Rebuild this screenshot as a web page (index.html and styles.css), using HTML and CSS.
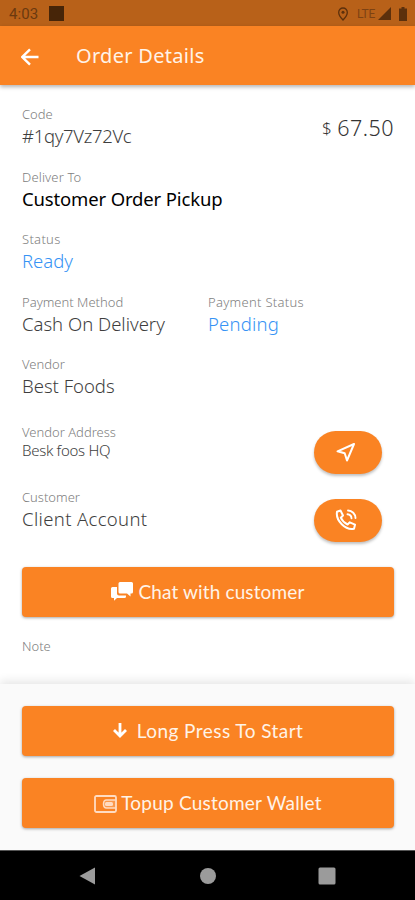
FILE: index.html
```html
<!DOCTYPE html>
<html lang="en">
<head>
<meta charset="utf-8">
<title>Order Details</title>
<link rel="stylesheet" href="styles.css">
</head>
<body>
<div class="statusbar">
  <span class="time">4:03</span><span class="square"></span>
  <svg class="pin" viewBox="0 0 12 14"><path d="M6 1a4.3 4.3 0 0 0-4.3 4.4C1.700 8.500 6 13 6 13s4.300-4.500 4.300-7.600A4.300 4.300 0 0 0 6 1z" fill="none" stroke="currentColor" stroke-width="1.300"/><circle cx="6" cy="5.300" r="1.500" fill="currentColor"/></svg>
  <span class="lte">LTE</span>
  <svg class="signal" viewBox="0 0 13 13"><path d="M13 0v13H0z" fill="currentColor"/></svg>
  <svg class="battery" viewBox="0 0 8 14"><path d="M2.500 0h3v1.500H8V14H0V1.500h2.500z" fill="currentColor"/></svg>
</div>
<header class="appbar">
  <svg class="back" viewBox="0 0 18 18"><path d="M17.500 9H1.500M9 1.300 1.300 9 9 16.700" fill="none" stroke="currentColor" stroke-width="2.400"/></svg>
  <h1>Order Details</h1>
</header>
<main class="details">
  <div class="row">
    <div class="field"><div class="label">Code</div><div class="value code">#1qy7Vz72Vc</div></div>
    <div class="price"><span class="currency">$</span><span>67.50</span></div>
  </div>
  <div class="row"><div class="field"><div class="label deliver">Deliver To</div><div class="value strong">Customer Order Pickup</div></div></div>
  <div class="row"><div class="field"><div class="label status">Status</div><div class="value blue">Ready</div></div></div>
  <div class="row">
    <div class="field half"><div class="label">Payment Method</div><div class="value">Cash On Delivery</div></div>
    <div class="field"><div class="label paystatus">Payment Status</div><div class="value blue pending">Pending</div></div>
  </div>
  <div class="row vendor"><div class="field"><div class="label">Vendor</div><div class="value">Best Foods</div></div></div>
  <div class="row address">
    <div class="field"><div class="label">Vendor Address</div><div class="value small">Besk foos HQ</div></div>
    <div class="pill"><svg class="navicon" viewBox="0 0 20 20"><path d="M18 2 1.500 9.300l7.200 2L11 18.500z" fill="none" stroke="currentColor" stroke-width="2" stroke-linejoin="round"/></svg></div>
  </div>
  <div class="row customer">
    <div class="field"><div class="label">Customer</div><div class="value client">Client Account</div></div>
    <div class="pill"><svg class="callicon" viewBox="0 0 22 22"><path d="M2 2.800 5.500 1.500 8 6.500 5.800 8.700c1.300 3 3.700 5.400 6.800 6.800l2.200-2.200 5.200 2.400-1 4C10.500 21.500.500 11.500 2 2.800z" fill="none" stroke="currentColor" stroke-width="2" stroke-linejoin="round"/><path d="M12.500 5.300a4.300 4.300 0 0 1 4 4M13 1.500a7.700 7.700 0 0 1 7.500 7.500" fill="none" stroke="currentColor" stroke-width="1.900" stroke-linecap="round"/></svg></div>
  </div>
  <div class="button chat">
    <svg class="chaticon" viewBox="0 0 22 19"><path d="M1.500 5H6v6.500a2 2 0 0 0 2 2h7V14.500a1.500 1.500 0 0 1-1.500 1.500H6l-3 2.800V16H1.500A1.500 1.500 0 0 1 0 14.500v-8A1.500 1.500 0 0 1 1.500 5z" fill="currentColor"/><path d="M9 0h11.500A1.500 1.500 0 0 1 22 1.500v8.500a1.500 1.500 0 0 1-1.500 1.500H19.500v3L16 11.500H9A1.500 1.500 0 0 1 7.500 10V1.500A1.500 1.500 0 0 1 9 0z" fill="currentColor"/></svg>
    <span>Chat with customer</span>
  </div>
  <div class="label note">Note</div>
</main>
<footer class="actions">
  <div class="button long">
    <svg class="down" viewBox="0 0 14 15"><path d="M7 0v13M1 7l6 6 6-6" fill="none" stroke="currentColor" stroke-width="2.800"/></svg>
    <span>Long Press To Start</span>
  </div>
  <div class="button topup">
    <svg class="wallet" viewBox="0 0 23 18"><rect x="1" y="1" width="21" height="16" rx="1.500" fill="none" stroke="currentColor" stroke-width="1.800"/><path d="M22 5h-9.500Q9.500 5 9.500 9t3 4H22" fill="currentColor" fill-opacity=".25" stroke="currentColor" stroke-width="1.500"/><rect x="11" y="7" width="8" height="4" rx="1.500" fill="currentColor"/></svg>
    <span>Topup Customer Wallet</span>
  </div>
</footer>
<nav class="navbar">
  <svg viewBox="0 0 18 18"><path d="M16 .500v17L.500 9z" fill="currentColor"/></svg>
  <svg viewBox="0 0 18 18"><circle cx="9" cy="9" r="8" fill="currentColor"/></svg>
  <svg viewBox="0 0 18 18"><rect x=".500" y=".500" width="17" height="17" rx="1.500" fill="currentColor"/></svg>
</nav>
</body>
</html>
```
FILE: styles.css
```css
* { box-sizing: border-box; }
body { margin: 0; width: 415px; height: 900px; overflow: hidden; display: flex; flex-direction: column; background: #fff; font-family: "Noto Sans", "Open Sans", sans-serif; }
svg { display: block; flex: none; }
span, h1, .label, .value { white-space: nowrap; }
.statusbar { height: 26px; flex: none; display: flex; align-items: center; padding: 1px 8px 0 9px; background: #b86119; color: #5c300c; font-family: Roboto, sans-serif; }
.time { width: 40px; font-size: 15px; letter-spacing: .1px; color: #6b390f; }
.square { width: 15px; height: 15px; background: #472508; }
.pin { width: 12px; height: 14px; margin-left: auto; margin-right: 8px; }
.lte { width: 21px; font-size: 12px; letter-spacing: -.3px; color: #7d4213; }
.signal { width: 13px; height: 13px; }
.battery { width: 8px; height: 14px; margin-left: 8px; }
.appbar { height: 59px; flex: none; display: flex; align-items: center; padding: 0 21px; background: #fa8323; color: #fff3e9; box-shadow: 0 2px 4px rgba(0,0,0,.3); z-index: 1; }
.back { width: 18px; height: 18px; margin-top: 2px; color: #fff; }
h1 { margin: 0 0 0 37px; font-size: 20px; line-height: 28px; font-weight: 400; letter-spacing: .3px; }
.details { height: 599px; flex: none; padding: 21px 21px 0 22px; }
.row { height: 62.500px; display: flex; }
.label { height: 17px; font-size: 13px; line-height: 16px; font-weight: 300; color: #808080; }
.value { height: 25px; font-size: 18.500px; line-height: 25px; font-weight: 300; color: #3e3e3e; }
.code { letter-spacing: -.3px; }
.deliver { letter-spacing: .15px; }
.status { letter-spacing: .3px; }
.paystatus { letter-spacing: .3px; }
.half { width: 186px; }
.strong { color: #000; font-weight: 400; letter-spacing: -.15px; }
.blue { color: #3693f5; }
.pending { letter-spacing: .2px; }
.small { font-size: 15px; line-height: 19px; letter-spacing: -.3px; }
.client { letter-spacing: .35px; }
.price { margin-left: auto; height: 42px; display: flex; align-items: center; gap: 5px; font-size: 21.500px; letter-spacing: .5px; font-weight: 300; color: #333; }
.currency { font-size: 17px; }
.vendor { height: 67.500px; }
.address { height: 65px; }
.pill { width: 68px; height: 43px; flex: none; margin: 7px 12px 0 auto; border-radius: 22px; background: #fa8323; color: #fff; display: flex; align-items: center; justify-content: center; box-shadow: 0 2px 3px rgba(0,0,0,.25); }
.navicon { width: 20px; height: 20px; margin-right: 4px; }
.callicon { width: 22px; height: 22px; margin-right: 4px; }
.customer { height: 78px; }
.customer .pill { margin-top: 10px; }
.button { height: 50px; padding-bottom: 1px; display: flex; align-items: center; justify-content: center; border-radius: 4px; background: #fa8323; color: #fff3e8; font-size: 19px; font-family: Lato, sans-serif; box-shadow: 0 1px 3px rgba(0,0,0,.35); }
.chat { letter-spacing: .13px; }
.long { letter-spacing: .45px; }
.topup { letter-spacing: .22px; }
.chaticon { width: 22px; height: 19px; margin-right: 5px; color: #fff; }
.note { margin-top: 21px; }
.actions { height: 166px; flex: none; padding: 22px 21px 0 22px; display: flex; flex-direction: column; gap: 22px; background: #fafafa; box-shadow: 0 -3px 9px rgba(0,0,0,.1); }
.down { width: 14px; height: 15px; margin-right: 10px; color: #fff; }
.wallet { width: 23px; height: 18px; margin-right: 4px; margin-top: 2px; color: #ffdcc2; }
.navbar { height: 50px; flex: none; display: flex; align-items: center; justify-content: space-between; padding: 0 79px; border-top: 1px solid #555; background: #000; color: #9b9b9b; }
.navbar svg { width: 18px; height: 18px; }
```
